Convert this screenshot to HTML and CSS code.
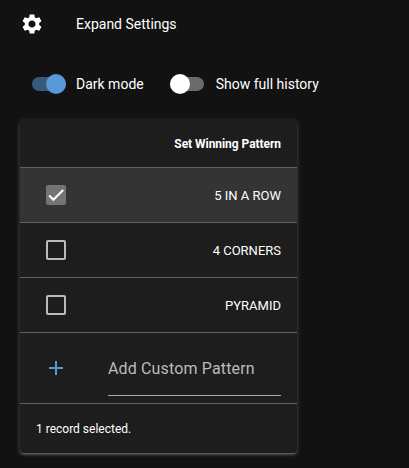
FILE: index.html
```html
<!DOCTYPE html>
<html lang="en">
<head>
<meta charset="utf-8">
<title>Settings</title>
<link rel="stylesheet" href="styles.css">
</head>
<body>
<header class="expand">
  <svg class="icon" viewBox="0 0 24 24"><path d="M19.14 12.94c.04-.3.06-.61.06-.94 0-.32-.02-.64-.07-.94l2.03-1.58c.18-.14.23-.41.12-.61l-1.92-3.32c-.12-.22-.37-.29-.59-.22l-2.39.96c-.5-.38-1.03-.7-1.62-.94l-.36-2.54c-.04-.24-.24-.41-.48-.41h-3.84c-.24 0-.43.17-.47.41l-.36 2.54c-.59.24-1.13.57-1.62.94l-2.39-.96c-.22-.08-.47 0-.59.22L2.74 8.87c-.12.21-.08.47.12.61l2.03 1.58c-.05.3-.09.63-.09.94s.02.64.07.94l-2.03 1.58c-.18.14-.23.41-.12.61l1.92 3.32c.12.22.37.29.59.22l2.39-.96c.5.38 1.03.7 1.62.94l.36 2.54c.05.24.24.41.48.41h3.84c.24 0 .44-.17.47-.41l.36-2.54c.59-.24 1.13-.56 1.62-.94l2.39.96c.22.08.47 0 .59-.22l1.92-3.32c.12-.22.07-.47-.12-.61l-2.01-1.58zM12 15.6c-1.98 0-3.6-1.62-3.6-3.6s1.62-3.6 3.6-3.6 3.6 1.62 3.6 3.6-1.62 3.6-3.6 3.6z"/></svg>
  <span>Expand Settings</span>
</header>
<div class="toggles">
  <label class="toggle on"><span class="track"><i class="thumb"></i></span>Dark mode</label>
  <label class="toggle"><span class="track"><i class="thumb"></i></span>Show full history</label>
</div>
<section class="card">
  <div class="row head">Set Winning Pattern</div>
  <div class="row selected">
    <span class="box checked"><svg viewBox="0 0 24 24"><path d="M1.73,12.91 8.1,19.28 22.79,4.59"/></svg></span>
    <span>5 IN A ROW</span>
  </div>
  <div class="row"><span class="box"></span><span>4 CORNERS</span></div>
  <div class="row"><span class="box"></span><span>PYRAMID</span></div>
  <div class="row add">
    <svg class="icon plus" viewBox="0 0 24 24"><path d="M19 13h-6v6h-2v-6H5v-2h6V5h2v6h6z"/></svg>
    <div class="field">Add Custom Pattern</div>
  </div>
  <footer class="foot">1 record selected.</footer>
</section>
</body>
</html>
```
FILE: styles.css
```css
* { box-sizing: border-box; }
body {
  margin: 0;
  height: 468px;
  overflow: hidden;
  background: #121212;
  color: #fff;
  font: 14px/21px Roboto, sans-serif;
}
.icon { width: 24px; height: 24px; fill: currentColor; flex: none; }
.expand {
  display: flex;
  align-items: center;
  gap: 32px;
  height: 48px;
  padding-left: 20px;
}
.toggles { display: flex; gap: 26px; padding: 16px 0 0 32px; }
.toggle { display: flex; align-items: center; height: 40px; gap: 10px; white-space: nowrap; }
.toggle:last-child { gap: 12px; }
.track {
  display: flex;
  align-items: center;
  width: 34px;
  height: 14px;
  border-radius: 7px;
  background: #6b6b6b;
}
.thumb { width: 20px; height: 20px; flex: none; border-radius: 50%; background: #fff; }
.on .track { justify-content: flex-end; background: #385979; }
.on .thumb { background: #5a99d7; }
.card {
  width: 277px;
  margin: 16px 0 0 20px;
  overflow: hidden;
  border-radius: 4px;
  background: #1d1d1d;
  box-shadow: 0 1px 5px rgba(255, 255, 255, .2), 0 2px 2px rgba(255, 255, 255, .14), 0 3px 1px -2px rgba(255, 255, 255, .12);
  font-size: 13px;
}
.row {
  display: flex;
  align-items: center;
  justify-content: space-between;
  height: 55px;
  padding: 0 16px 0 26px;
  border-bottom: 1px solid #606060;
}
.head { height: 48px; padding-top: 2px; justify-content: flex-end; font-size: 12px; font-weight: 700; letter-spacing: -.05px; }
.selected { background: #343434; }
.box { width: 20px; height: 20px; border: 2px solid #bbb; border-radius: 2px; }
.box.checked { border-color: #747474; background: #747474; }
.box svg { display: block; width: 16px; height: 16px; fill: none; stroke: #fff; stroke-width: 3.12; }
.add { height: 71px; padding-left: 24px; }
.plus { color: #5a99d7; }
.field {
  width: 173px;
  height: 56px;
  margin-top: -1px;
  border-bottom: 1px solid #ababab;
  color: #bbb;
  font-size: 16px;
  line-height: 58px;
  letter-spacing: .15px;
}
.foot { height: 49px; padding-left: 16px; font-size: 12px; line-height: 50px; }
```
